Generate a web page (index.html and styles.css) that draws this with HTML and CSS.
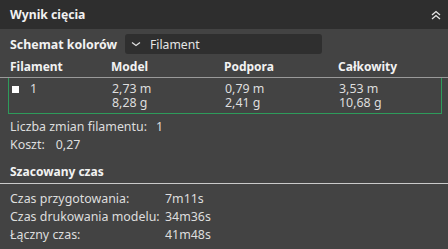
FILE: index.html
```html
<!DOCTYPE html>
<html>
<head>
<meta charset="utf-8">
<link rel="stylesheet" href="styles.css">
</head>
<body>
<div class="panel">
  <div class="header">
    <span class="title">Wynik cięcia</span>
    <svg class="collapse" width="10" height="10" viewBox="0 0 10 10"><path d="M1 5 L5 1.5 L9 5 M1 9 L5 5.5 L9 9" fill="none" stroke="#e6e6e6" stroke-width="1.3"/></svg>
  </div>
  <div class="content">
    <div class="scheme">
      <span class="bold scheme-label">Schemat kolorów</span>
      <div class="combo">
        <svg class="chev" width="10" height="6" viewBox="0 0 10 6"><path d="M1 1.5 L5 4.5 L9 1.5" fill="none" stroke="#e0e0e0" stroke-width="1.2"/></svg>
        <span>Filament</span>
      </div>
    </div>
    <div class="thead">
      <span class="bold">Filament</span>
      <span class="bold">Model</span>
      <span class="bold">Podpora</span>
      <span class="bold">Całkowity</span>
    </div>
    <div class="rowwrap">
      <div class="trow">
        <div class="fil"><span class="swatch"></span><span>1</span></div>
        <div class="cell"><span>2,73 m</span><span>8,28 g</span></div>
        <div class="cell"><span>0,79 m</span><span>2,41 g</span></div>
        <div class="cell"><span>3,53 m</span><span>10,68 g</span></div>
      </div>
    </div>
    <div class="info">
      <div class="line">Liczba zmian filamentu:<span class="val1">1</span></div>
      <div class="line">Koszt:<span class="val2">0,27</span></div>
    </div>
    <div class="section bold">Szacowany czas</div>
    <div class="times">
      <div class="trow2"><span class="tl">Czas przygotowania:</span><span>7m11s</span></div>
      <div class="trow2"><span class="tl">Czas drukowania modelu:</span><span>34m36s</span></div>
      <div class="trow2"><span class="tl">Łączny czas:</span><span>41m48s</span></div>
    </div>
  </div>
</div>
</body>
</html>
```
FILE: styles.css
```css
html, body {
  margin: 0;
  padding: 0;
  background: #434343;
}
body {
  width: 448px;
  height: 249px;
  overflow: hidden;
  font-family: "Noto Sans", "Open Sans", sans-serif;
  font-size: 12.4px;
  color: #dedede;
}
.bold {
  font-weight: 700;
  font-size: 12px;
  color: #f2f2f2;
}
.header {
  height: 29px;
  background: #2e2e2e;
  display: flex;
  align-items: center;
  justify-content: space-between;
  padding: 0 7px 0 10px;
}
.title {
  font-weight: 700;
  font-size: 12.2px;
  color: #f2f2f2;
}
.collapse {
  display: block;
}
.scheme {
  display: flex;
  align-items: center;
  height: 20px;
  margin-top: 5px;
  padding-left: 10px;
}
.scheme-label {
  width: 115px;
  font-size: 12.4px;
}
.combo {
  width: 197px;
  height: 20px;
  background: #2f2f2f;
  border-radius: 3px;
  display: flex;
  align-items: center;
  box-sizing: border-box;
  padding-left: 6px;
  font-size: 12.2px;
  color: #e6e6e6;
}
.chev {
  margin-right: 9px;
}
.thead {
  display: grid;
  grid-template-columns: 101px 113px 114px 1fr;
  padding-left: 10px;
  padding-top: 2px;
  height: 24px;
  align-items: center;
  border-bottom: 1px solid #9a9a9a;
  box-sizing: border-box;
}
.rowwrap {
  padding: 0 6px 0 8px;
}
.trow {
  border: 1.5px solid #2e9b5b;
  border-top: none;
  height: 36px;
  box-sizing: border-box;
  display: grid;
  grid-template-columns: 101px 113px 114px 1fr;
  padding-left: 2px;
  padding-top: 4px;
  line-height: 14px;
}
.fil {
  display: flex;
  align-items: center;
  height: 14px;
}
.swatch {
  width: 7px;
  height: 7px;
  background: #ffffff;
  margin-left: 1px;
  margin-right: 11px;
}
.cell {
  display: flex;
  flex-direction: column;
}
.info {
  padding-left: 10px;
  padding-top: 4px;
}
.line {
  height: 18px;
  line-height: 18px;
}
.val1 {
  margin-left: 9px;
}
.val2 {
  margin-left: 11px;
}
.section {
  padding-left: 10px;
  margin-top: 9px;
  height: 18px;
  line-height: 18px;
  border-bottom: 1.5px solid #cacaca;
  padding-bottom: 2px;
}
.times {
  padding-left: 10px;
  padding-top: 6px;
}
.trow2 {
  display: flex;
  height: 18px;
  line-height: 18px;
}
.tl {
  width: 155px;
}
```
